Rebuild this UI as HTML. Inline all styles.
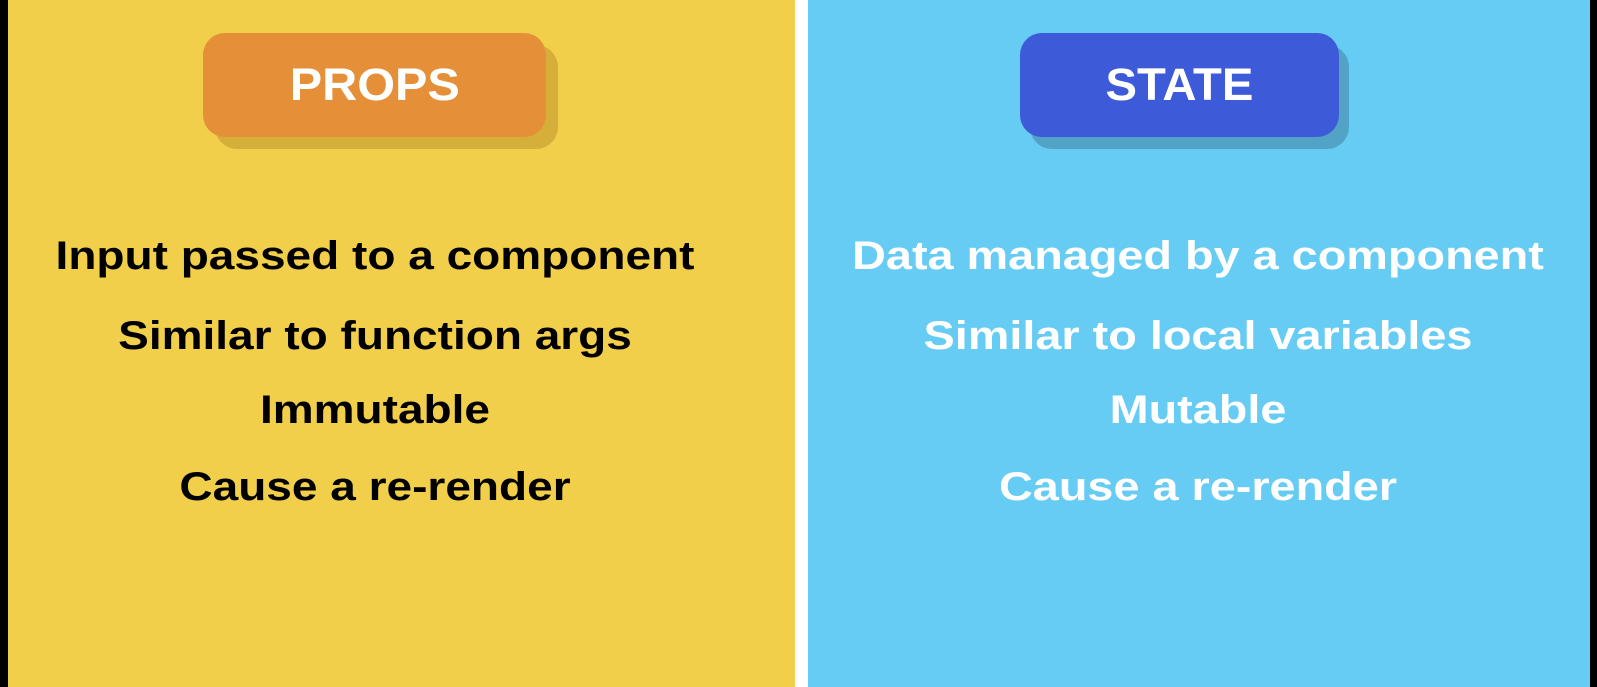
<!DOCTYPE html>
<html><head><style>
html,body{margin:0;padding:0;width:1597px;height:687px;overflow:hidden;background:#000;font-family:"Liberation Sans",sans-serif;font-weight:bold}
.p{position:absolute}
.line{position:absolute;left:0;width:100%;text-align:center;font-size:40px;line-height:40px;transform:scaleX(1.15)}
.r .line{transform:scaleX(1.17)}
</style></head><body>
<div class="p" style="left:8px;top:0;width:787px;height:687px;background:#F2CF4A"></div>
<div class="p" style="left:795px;top:0;width:13px;height:687px;background:#fff"></div>
<div class="p" style="left:808px;top:0;width:782px;height:687px;background:#66CCF4"></div>

<div class="p" style="left:215px;top:45px;width:343px;height:104px;border-radius:22px;background:#D6AE3A"></div>
<div class="p" style="left:203px;top:33px;width:343px;height:104px;border-radius:22px;background:#E59038;color:#fff;font-size:45px;line-height:104px;text-align:center"><span style="display:inline-block;transform:scaleX(1.08)">PROPS</span></div>

<div class="p" style="left:1030px;top:45px;width:319px;height:104px;border-radius:22px;background:#52A3C6"></div>
<div class="p" style="left:1020px;top:33px;width:319px;height:104px;border-radius:22px;background:#3D5AD9;color:#fff;font-size:45px;line-height:104px;text-align:center"><span style="display:inline-block;transform:scaleX(1.05)">STATE</span></div>

<div class="p" style="left:0;top:0;width:750px;height:687px;color:#000">
<div class="line" style="top:236px">Input passed to a component</div>
<div class="line" style="top:316px">Similar to function args</div>
<div class="line" style="top:390px">Immutable</div>
<div class="line" style="top:467px">Cause a re-render</div>
</div>
<div class="p r" style="left:798px;top:0;width:800px;height:687px;color:#fff">
<div class="line" style="top:236px">Data managed by a component</div>
<div class="line" style="top:316px">Similar to local variables</div>
<div class="line" style="top:390px">Mutable</div>
<div class="line" style="top:467px">Cause a re-render</div>
</div>
</body></html>
